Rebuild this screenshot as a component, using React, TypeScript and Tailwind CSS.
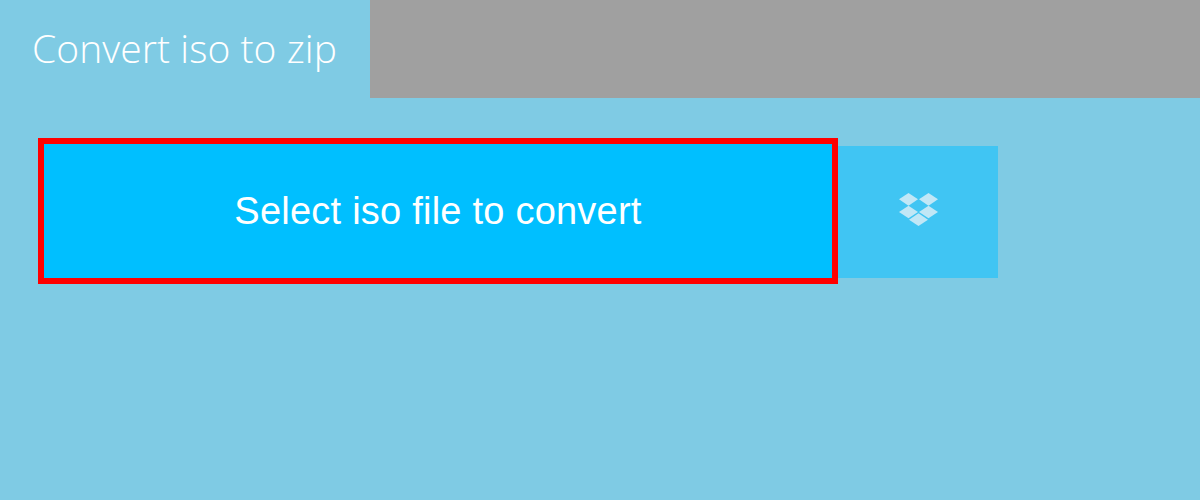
function DropboxIcon() {
	return (
		<svg className="mb-[5px] overflow-visible" width="40" height="33" viewBox="0 0 40 33" fill="#c1e7f6">
			<polygon points="1,6.3 10.5,0 20,6.3 10.5,12.7" />
			<polygon points="21,6.3 30.5,0 40,6.3 30.5,12.7" />
			<polygon points="1,19 10.5,12.7 20,19 10.5,25.3" />
			<polygon points="21,19 30.5,12.7 40,19 30.5,25.3" />
			<polygon points="11,26.7 20.5,20.3 30,26.7 20.5,33" />
		</svg>
	);
}

export default function App() {
	return (
		<div className="h-[500px] w-[1200px] overflow-hidden bg-[#7fcbe4]">
			<div className="flex h-[98px]">
				<div className="flex w-[370px] items-center pb-[2px] pl-[32px]">
					<h1 className="font-['Open_Sans',sans-serif] text-[39px] font-light tracking-[0.06px] text-white">
						Convert iso to zip
					</h1>
				</div>
				<div className="flex-1 bg-[#a0a0a0]" />
			</div>
			<div className="flex items-start pl-[38px] pt-[40px]">
				<button className="flex h-[146px] w-[800px] items-center justify-center border-[6px] border-[#ff0000] bg-[#00bfff] font-['Liberation_Sans',sans-serif] text-[38px] tracking-[0.23px] text-white">
					Select iso file to convert
				</button>
				<button className="mt-[8px] flex h-[132px] w-[160px] items-center justify-center bg-[#40c5f3]">
					<DropboxIcon />
				</button>
			</div>
		</div>
	);
}
